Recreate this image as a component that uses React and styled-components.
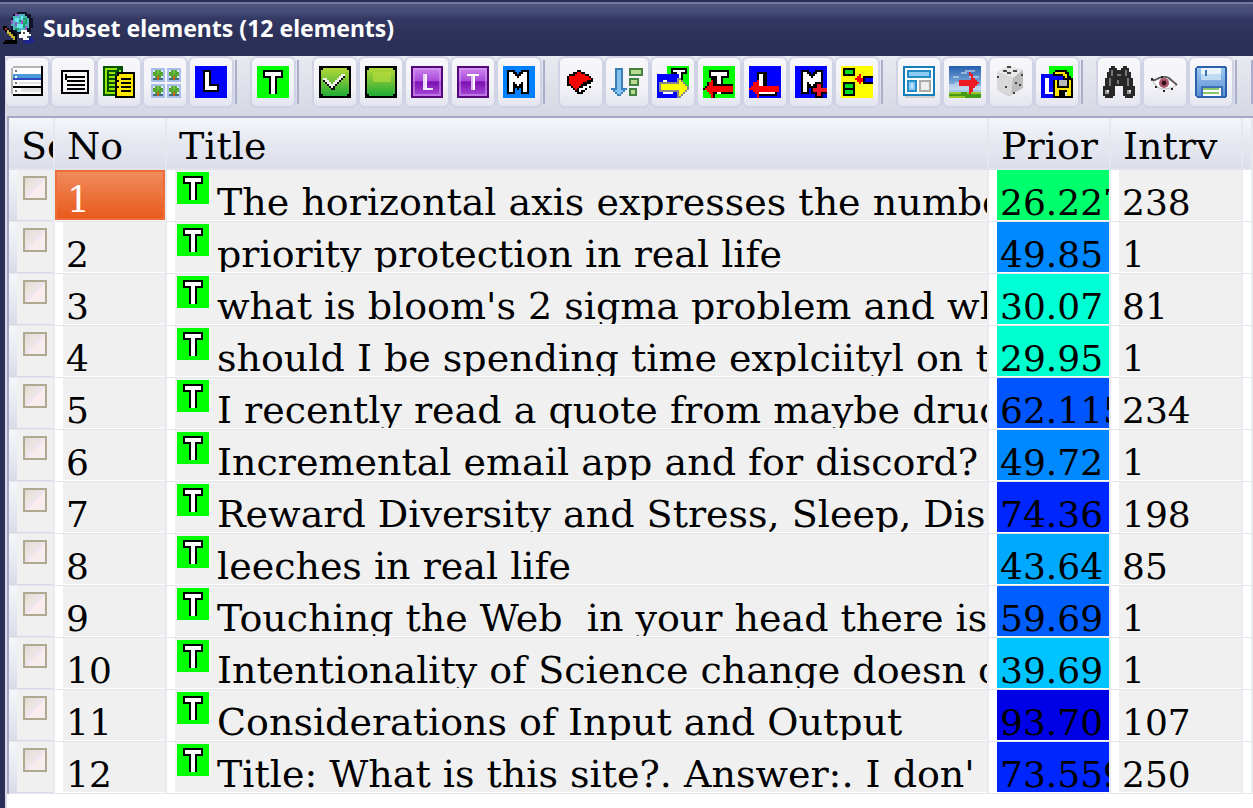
import React from 'react';
import styled, { createGlobalStyle } from 'styled-components';

const GlobalStyle = createGlobalStyle`
  * { box-sizing: border-box; }
  html, body { margin: 0; background: #fff; }
  body { overflow: hidden; }
`;

const Window = styled.div`
  min-height: 100vh;
  padding-left: 5px;
  background: #2a2f57;
  display: flex;
  flex-direction: column;
`;

const TitleBar = styled.header`
  height: 56px;
  margin-left: -5px;
  padding: 0 0 0 3px;
  display: flex;
  align-items: center;
  gap: 8px;
  background: linear-gradient(#2a2f55 0 2px, #7478a0 2px 4px, #50557f 4px, #434a75 13px, #343a64 18px, #2c3159 36px, #2a2f57 56px);
`;

const Caption = styled.h1`
  margin: 0;
  font: 700 23px/32px "Noto Sans", sans-serif;
  color: #fff;
  white-space: nowrap;
`;

const Toolbar = styled.div`
  height: 60px;
  flex: none;
  padding-top: 1px;
  display: flex;
  align-items: flex-start;
  gap: 2px;
  overflow: hidden;
  background: linear-gradient(#e9eaf0, #d5d7e3);
`;

const ToolButton = styled.button`
  flex: none;
  width: 44px;
  height: 50px;
  padding: 0;
  display: grid;
  place-items: center;
  border: 1px solid #d0d2e5;
  border-radius: 6px;
  background: linear-gradient(#f8f8fb, #f2f2f7 60%, #e4e5ef);
  box-shadow: 0 0 0 1px #d0d2e5;
`;

const Separator = styled.span`
  flex: none;
  width: 2px;
  height: 44px;
  margin: 3px 12px 0 0;
  background: #a9aecb;
`;

const List = styled.main`
  flex: 1;
  border-left: 2px solid #d9dae5;
  background: #fff;
`;

const ListFrame = styled.div`
  border: solid #a4a8c5;
  border-width: 2px 0 0 2px;
  overflow: hidden;
  min-height: 100%;
`;

const Grid = styled.table`
  width: 100%;
  table-layout: fixed;
  border-collapse: separate;
  border-spacing: 0;
  font: 38px/64px "DejaVu Serif", serif;
  color: #000;
`;

const Col = styled.col`
  width: ${(p) => p.$w || 'auto'};
`;

const HeadCell = styled.th`
  height: 52px;
  padding: 0 0 0 12px;
  text-align: left;
  font-weight: 400;
  line-height: 57px;
  border-right: 2px solid #e6e8ee;
  border-bottom: 2px solid #e0e2ec;
  background: linear-gradient(#f5f6fa, #e6e8f1 50%, #dcdeea);
`;

const HeadText = styled.div`
  height: 50px;
  overflow: hidden;
  white-space: nowrap;
`;

const Cell = styled.td`
  height: 52px;
  padding: 0 0 1px 8px;
  border-right: 2px solid #e8ebf0;
  border-bottom: 1px solid #e4e6eb;
  background: ${(p) => (p.$lead ? 'linear-gradient(#f6f7fb, #d9dbe9)' : '#fff')};
`;

const Content = styled.div`
  height: 50px;
  padding-left: 3px;
  overflow: hidden;
  white-space: pre;
  background: #f0f0f0;
`;

const NumberContent = styled(Content)`
  font-size: 36px;
  line-height: 66px;
  background: ${(p) => p.$fill || '#f0f0f0'};
`;

const TickContent = styled(Content)`
  padding: 6px 0 0 6px;
`;

const TitleContent = styled(Content)`
  display: flex;
  align-items: flex-start;
  gap: 8px;
  padding-left: 2px;

  svg { margin-top: 2px; }
`;

const SelectedCell = styled(Cell)`
  padding: 0 0 1px;
`;

const SelectedContent = styled(NumberContent)`
  padding-left: 10px;
  line-height: 56px;
  color: #fff;
  border: 2px solid #ee6c38;
  background: linear-gradient(#f08a5c, #ea5a1c);
`;

const Tick = styled.input`
  appearance: none;
  display: block;
  width: 24px;
  height: 24px;
  margin: 0;
  border: 2px solid #b0a890;
  background: linear-gradient(135deg, #dedbd4, #ece6e2 38%, #ebe4f0 48%, #fbecec 58%, #f1efec);
`;

const Svg = styled.svg`
  display: block;
  flex: none;
  width: 32px;
  height: 32px;
`;

const Art = ({ children, smooth }) => (
  <Svg viewBox="0 0 16 16" shapeRendering={smooth ? 'auto' : 'crispEdges'} aria-hidden="true">
    {children}
  </Svg>
);

const Tee = () => (
  <>
    <path fill="#000" d="M3 2h10v4h-3v8H6V6H3z" />
    <path fill="#fff" d="M4 3h8v2H9v9H7V5H4z" />
  </>
);

const Ell = () => (
  <>
    <path fill="#000" d="M4 2h4v7h4v4H4z" />
    <path fill="#fff" d="M5 3h2v7h4v2H5z" />
  </>
);

const Em = () => (
  <>
    <path fill="#000" d="M2 2h4v1h1v1h1V3h1V2h4v12H9v-3H8v1H7v-1H6v3H2z" />
    <path fill="#fff" d="M3 3h2v1h1v1h1v1h1V5h1V4h1V3h2v10h-2V8H9v1H8v1H7V9H6V8H5v5H3z" />
  </>
);

const TopicIcon = () => <Art><path fill="#0f0" d="M0 0h16v16H0z" /><Tee /></Art>;

const icons = {
  rows: (
    <Art>
      <path fill="#fff" d="M1 0h14v15H1z" />
      <path fill="#b4b4b4" d="M0 1h1V0h15v1H1v13H0z" />
      <path fill="#4b9bdc" d="M1 4h14v2H1z" /><path fill="#3048c0" d="M1 6h14v1H1z" />
      <path fill="#e4e4e4" d="M5 11h10v2H5zM4 8h11v1H4z" />
      <path d="M15 0h1v15H1v-1h14v-3H1v-1h14z" />
      <path fill="#777" d="M2 2h1v1H2zM2 8h1v1H2zM2 12h1v1H2z" /><path fill="#fff" d="M2 5h1v1H2z" />
    </Art>
  ),
  outline: (
    <Art>
      <path d="M2 2h14v12H2z" /><path fill="#f6f6f8" d="M3 3h12v10H3z" />
      <path d="M4 4h1v3H4zM5 5h9v1H5zM5 7h9v1H5zM5 9h9v1H5zM5 11h9v1H5z" />
    </Art>
  ),
  pages: (
    <Art>
      <path fill="#050" d="M0 0h10v15H0z" /><path fill="#9be40c" d="M1 1h6v1H1zM1 2h1v12H1zM3 3h3v1H3zM3 5h3v1H3zM3 7h3v1H3zM3 9h3v1H3zM3 11h3v1H3zM1 13h5v1H1zM8 2h1v1H8z" />
      <path d="M7 3h9v13H6V5h1z" /><path fill="#ffe800" d="M7 5h1V4h7v11H7z" />
      <path d="M9 6h5v1H9zM9 8h5v1H9zM9 10h5v1H9zM9 12h5v1H9zM7 7h1v1H7zM7 10h1v1H7z" />
    </Art>
  ),
  thumbs: (
    <Art>
      {[[1, 1], [9, 1], [1, 9], [9, 9]].map(([x, y]) => (
        <g key={`${x}-${y}`} transform={`translate(${x} ${y})`}>
          <path fill="#a9bde9" d="M0 0h7v7H0z" /><path fill="#d7e8fb" d="M1 1h5v4H1z" />
          <path fill="#55a532" d="M2 1h3v1h1v2H5v1H2V4H1V2h1z" /><path fill="#79c342" d="M3 1h1v2H3z" />
          <path fill="#476b83" d="M1 5h5v1H1z" /><path fill="#c36a20" d="M3 4h1v2H3z" />
        </g>
      ))}
    </Art>
  ),
  blueL: <Art><path fill="#00f" d="M0 0h16v16H0z" /><Ell /></Art>,
  greenT: <TopicIcon />,
  check: (
    <Art>
      <path d="M0 0h16v16H0z" /><path fill="url(#leaf)" d="M2 1h12v1h1v12h-1v1H2v-1H1V2h1z" />
      <path fill="#111" d="M2 7h2v1h1v1h1v1h1V9h1V8h1V7h1V6h1V5h1V4h1v2h-1v1h-1v1h-1v1h-1v1H8v2H6v-1H5v-1H4V9H3V8H2z" />
      <path fill="#f0f2ea" d="M2 6h2v1h1v1h1v1h1V8h1V7h1V6h1V5h1V4h2v1h-1v1h-1v1h-1v1H9v1H8v1H7v1H6v-1H5V9H4V8H3V7H2z" />
    </Art>
  ),
  green: (
    <Art>
      <path d="M0 0h16v16H0z" /><path fill="url(#leaf)" d="M2 1h12v1h1v12h-1v1H2v-1H1V2h1z" />
      <path fill="#b4dc3c" opacity=".7" d="M4 3h9v5H4z" />
    </Art>
  ),
  violetL: (
    <Art>
      <path fill="#56077c" d="M0 0h16v16H0z" /><path fill="url(#violet)" d="M1 1h14v14H1z" />
      <path fill="#d7a4f4" opacity=".5" d="M1 1h14v1H2v12h12V2h1v13H1z" />
      <path fill="#e9d3f7" d="M6 4h2v7h3v1H6z" /><path fill="#fff" d="M7 4h1v7h2v1H6v-1h1z" opacity=".6" />
    </Art>
  ),
  violetT: (
    <Art>
      <path fill="#56077c" d="M0 0h16v16H0z" /><path fill="url(#violet)" d="M1 1h14v14H1z" />
      <path fill="#d7a4f4" opacity=".5" d="M1 1h14v1H2v12h12V2h1v13H1z" />
      <path fill="#fff" d="M5 4h6v1H9v7H8V5H5z" /><path fill="#dcbcf1" d="M7 5h1v7H7z" />
    </Art>
  ),
  azureM: <Art><path fill="#0080ff" d="M0 0h16v16H0z" /><Em /></Art>,
  book: (
    <Art>
      <path d="M4 3h2V2h2v1h2v1h2v1h1v1h1v4h-1v1h-2v1h-1v1H9v1H6v-1H5v-1H4v-1H3v-1H1V5h1V4h2z" />
      <path fill="#f00" d="M5 4h1V3h2v1h2v1h2v1h1v1h-2v1h-2v1H8v1H7v1H6v1H5v-1H4v-1H3V9H2V5h3z" />
      <path fill="#fff" d="M7 11h2v-1h2V9h2V8h1v2h-2v1h-2v1H8v1H7z" />
    </Art>
  ),
  sort: (
    <Art>
      <path fill="#397fb8" d="M2 1h4v10h2v1H7v1H6v1H5v1H3v-1H2v-1H1v-1H0v-1h2z" />
      <path fill="#83c2ef" d="M3 2h2v10h2v0H6v1H5v1H3v-1H2v-1h1z" />
      <path fill="#438241" d="M9 1h7v4H9zM9 6h5v4H9zM9 11h4v4H9z" />
      <path fill="#bad992" d="M10 2h5v2h-5zM10 7h3v2h-3zM10 12h2v2h-2z" />
    </Art>
  ),
  linkT: (
    <Art>
      <path fill="#0f0" d="M5 0h11v12H5z" /><path d="M7 1h8v3h-2v8H9V4H7z" /><path fill="#fff" d="M8 2h6v1h-2v8h-2V3H8z" />
      <path fill="#00f" d="M0 4h11v12H0z" /><path fill="#fff" d="M3 7h2v7H3zM4 13h4v1H4z" />
      <path fill="#888" d="M1 8h9V6h2v1h1v1h1v1h1v1h1v2h-1v1h-1v1h-1v1h-1v1h-2v-3H1z" />
      <path fill="#ff0" d="M2 9h9V7h1v1h1v1h1v1h1v2h-1v1h-1v1h-1v1h-1v-3H2z" />
    </Art>
  ),
  moveT: (
    <Art><path fill="#0f0" d="M0 0h16v16H0z" /><Tee />
      <path d="M4 6h2v3h9v5H6v2H4v-2H3v-1H2v-1H0v-1h1v-1h1V8h2z" />
      <path fill="red" d="M4 7h1v3h10v3H5v3H4v-2H3v-1H2v-1H1v-1h1v-1h1V8h1z" /><path fill="#fff" d="M7 13h2v1H7z" />
    </Art>
  ),
  moveL: (
    <Art><path fill="#00f" d="M0 0h16v16H0z" /><path d="M4 3h5v7h5v5H4z" /><path fill="#fff" d="M5 4h2v9h6v1H5z" />
      <path fill="red" d="M4 7h1v3h10v3H5v3H4v-2H3v-1H2v-1H0v-1h1v-1h1V8h2z" />
    </Art>
  ),
  addM: (
    <Art><path fill="#00f" d="M0 0h16v16H0z" /><g transform="translate(1 0)"><Em /></g>
      <path d="M10 8h4v3h2v3h-2v2h-4v-2H8v-3h2z" /><path fill="#f01828" d="M11 9h2v2h3v2h-3v2h-2v-2H9v-2h2z" />
    </Art>
  ),
  insert: (
    <Art><path fill="#ff0" d="M0 0h16v16H0z" /><path d="M1 1h6v4H1zM1 8h6v7H1zM11 5h5v4h-5z" />
      <path fill="#00e020" d="M2 2h4v2H2zM2 9h4v2H2zM2 12h4v2H2z" /><path fill="#00f" d="M12 6h4v2h-4z" />
      <path fill="red" d="M9 4h1v2h1v2h-1v1H9V8H8V7H7V6h1V5h1z" />
    </Art>
  ),
  layout: (
    <Art><path fill="#147eb8" d="M0 0h16v15H0z" /><path fill="#fff" d="M1 1h14v13H1z" /><path fill="#cfcfcf" d="M1 15h15v1H1z" />
      <path fill="#258cc6" d="M2 2h12v4H2zM2 7h5v6H2z" /><path fill="#8dcdf5" d="M3 3h10v2H3zM3 8h3v4H3z" /><path fill="#c9e9ff" d="M4 9h1v2H4z" />
      <path fill="#aaa" d="M8 7h6v6H8z" /><path fill="#eee" d="M9 8h4v4H9z" />
    </Art>
  ),
  picture: (
    <Art><path fill="url(#sky)" d="M0 0h16v13H0z" /><path fill="#e5edf6" d="M0 9h3V8h3v1h7v1h3v2H0zM6 3h2V2h5v1H9v1H6zM2 5h3v1H2zM10 5h5v1h-5z" opacity=".5" />
      <path fill="#449b19" d="M0 14h4v-1h7v1h5v2H0z" /><path fill="#99c72a" d="M0 13h6v1H0zM9 13h7v1H9zM0 15h8v1H0z" />
      <path fill="#ed1c24" d="M10 3h1v1h1v2h1v1h1v1h1v1h-1v1h-1v1h-1v2h-1v1h-1v-4H5V7h6V5h-1z" />
    </Art>
  ),
  dice: (
    <Art smooth><path fill="#bcbcbc" d="m1 3 6-3 7 2v9l-7 4-6-3z" /><path fill="#e8e8e8" d="m1 3 6-3 7 2-5 4z" />
      <path fill="#d9d9d9" d="m1 3 8 3-1 9-7-3z" />
      <path fill="#444" d="M6 0h2v1H6zM4 2h2v1H4zM6 3h2v1H6zM9 2h2v1H9zM1 5h1v1H1zM5 10h1v1H5zM9 13h1v1H9zM10 8h1v1h-1zM13 4h1v1h-1zM12 9h1v1h-1z" />
    </Art>
  ),
  saveSet: (
    <Art><path fill="#0f0" d="M4 0h12v12H4z" /><path fill="#00f" d="M0 4h11v12H0z" /><path fill="#fff" d="M2 6h2v7h2v1H2z" />
      <path d="M6 3h1V2h6v1h1v2h1v1h1v10H6V7h5V5H6z" /><path fill="#ffe800" d="M7 3h5v1h1v2h-1V5h-1V4H7zM7 7h1v4h6V7h1v8h-2v-3H9v3H7z" />
      <path fill="#b8b8b8" d="M9 7h4v3H9z" /><path fill="#ddd" d="M12 13h1v2h-1z" />
    </Art>
  ),
  find: (
    <Art><path fill="#272727" d="M3 1h4v1h2V1h4v2h1v3h1v4h1v5h-1v1h-4v-1h-1v-5H6v5H5v1H1v-1H0v-5h1V6h1V3h1zM4 0h2v1H4zM10 0h2v1h-2z" />
      <path fill="#777" d="M4 2h1v3H4zM3 6h1v4H3zM11 2h1v3h-1zM12 6h1v4h-1zM7 4h2v1H7zM7 7h1v2H7z" />
      <path fill="#999" d="M1 12h2v2H1zM12 12h2v2h-2z" /><path fill="#eee" d="M2 12h1v1H2zM13 12h1v1h-1z" />
    </Art>
  ),
  eye: (
    <Art smooth><path fill="#fff" stroke="#bbb" strokeWidth=".5" d="M2 7.500Q8 4 14 9.500 8 13 4 10.500z" />
      <path fill="none" stroke="#5e5658" strokeWidth=".9" d="M1 7 3 7Q7 4.500 10 6l4 3.500" />
      <circle cx="7.500" cy="8.500" r="2.500" fill="#ae5771" /><circle cx="7.500" cy="8.500" r="1.200" fill="#37121e" />
      <path fill="#222" d="M3 10h1v1H3zM7 12h1v1H7zM11 11h1v1h-1zM1 6h1v1H1zM6 5h1v1H6z" />
    </Art>
  ),
  disk: (
    <Art><path fill="#2c62ac" d="M1 0h14l1 1v14l-1 1H1l-1-1V1z" /><path fill="url(#disk)" d="M1 1h14v14H1z" />
      <path fill="#e9f3fc" d="M3 1h10v6H3z" /><path fill="#bfdbf1" d="M3 4h10v3H3z" /><path fill="#3d75ba" d="M5 2h1v3H5z" />
      <path fill="#3b70b7" d="M3 10h11v5H3z" /><path fill="#fff" d="M4 11h9v4H4z" /><path fill="#8bc56b" d="M4 11h8v1H4zM4 13h8v1H4z" />
    </Art>
  ),
};

const groups = [
  [['rows', 'List view'], ['outline', 'Outline view'], ['pages', 'Pages'], ['thumbs', 'Thumbnails'], ['blueL', 'Lessons']],
  [['greenT', 'Topics']],
  [['check', 'Check'], ['green', 'Uncheck'], ['violetL', 'Violet L'], ['violetT', 'Violet T'], ['azureM', 'Memorized']],
  [['book', 'Book'], ['sort', 'Sort'], ['linkT', 'Link'], ['moveT', 'Move topic'], ['moveL', 'Move lesson'], ['addM', 'Add'], ['insert', 'Insert']],
  [['layout', 'Layout'], ['picture', 'Picture'], ['dice', 'Random'], ['saveSet', 'Save subset']],
  [['find', 'Find'], ['eye', 'View'], ['disk', 'Save']],
];

const elements = [
  ['The horizontal axis expresses the numbe', '26.227', '238', '#00ff6c'],
  ['priority protection in real life', '49.85', '1', '#0088ff'],
  ["what is bloom's 2 sigma problem and wh", '30.07', '81', '#00ffd4'],
  ['should I be spending time explciityl on t', '29.95', '1', '#00ffcf'],
  ['I recently read a quote from maybe druc', '62.115', '234', '#0055ff'],
  ['Incremental email app and for discord?', '49.72', '1', '#0088ff'],
  ['Reward Diversity and Stress, Sleep, Disc', '74.36', '198', '#0026ff'],
  ['leeches in real life', '43.64', '85', '#00a8ff'],
  ['Touching the Web  in your head there is', '59.69', '1', '#005eff'],
  ['Intentionality of Science change doesn c', '39.69', '1', '#00c4ff'],
  ['Considerations of Input and Output', '93.70', '107', '#0000e6'],
  ["Title: What is this site?. Answer:. I don'", '73.559', '250', '#0026ff'],
];

const HiddenSvg = styled.svg`
  position: absolute;
`;

const Gradients = () => (
  <HiddenSvg width="0" height="0" aria-hidden="true">
    <defs>
      <linearGradient id="leaf" x2="0" y2="1"><stop stopColor="#b2d939" /><stop offset=".5" stopColor="#6cc038" /><stop offset="1" stopColor="#20ad38" /></linearGradient>
      <linearGradient id="violet" x2="0" y2="1"><stop stopColor="#cf83f0" /><stop offset=".45" stopColor="#a84bd8" /><stop offset=".5" stopColor="#7c0fb2" /><stop offset="1" stopColor="#a94bd8" /></linearGradient>
      <linearGradient id="sky" x2="0" y2="1"><stop stopColor="#235eae" /><stop offset="1" stopColor="#a7cced" /></linearGradient>
      <linearGradient id="disk" x2="0" y2="1"><stop stopColor="#9ec7ee" /><stop offset="1" stopColor="#5c8fd6" /></linearGradient>
    </defs>
  </HiddenSvg>
);

const AppIcon = () => (
  <Art>
    <path fill="#101426" d="M5 1h2V0h5v1h2v2h1v5h-1v2h-2v1H5V9H4V3h1z" />
    <path fill="#4fb4c0" d="M5 2h1V1h5v1h1v1h1v5h-1v1h-1v1H7V9H5V7H4V4h1z" />
    <path fill="#68e8ed" d="M6 3h2v2H6zM7 6h3v2H7zM9 2h1v2H9z" /><path fill="#17a45e" d="M10 3h2v3h-1v2h-1V5h1V4h-1zM6 8h2v1H6zM8 4h1v1H8z" />
    <path fill="#8f5cc4" d="M6 1h2v1H6zM4 4h1v2H4zM9 4h1v2H9zM6 5h1v2H6zM11 7h1v2h-1z" />
    <path d="M0 7h2v1h1v1h2v1h1v1h1v3H5v-1H4v-1H3v-1H2v-1H1V9H0zM1 14h6v2H0v-1h1z" />
    <path fill="#c4b535" d="M2 9h1v1h1v1h1v1h1v2H5v-1H4v-1H3v-1H2z" /><path fill="#b32323" d="M1 8h1v1H1z" />
    <path fill="#fff" d="M9 9h3v1h1v1h1v2h-1v1h-3v-1H8v-2h1z" /><path fill="#1c258e" d="M13 12h1v1h1v1h1v1h-2v1h-3v-1h-1v-1h3z" /><path fill="#555" d="M10 10h1v1h-1zM12 12h1v1h-1z" />
  </Art>
);

export default function App() {
  return (
    <Window>
      <GlobalStyle />
      <Gradients />
      <TitleBar>
        <AppIcon />
        <Caption>Subset elements (12 elements)</Caption>
      </TitleBar>
      <Toolbar role="toolbar" aria-label="Subset tools">
        {groups.map((group, i) => (
          <React.Fragment key={i}>
            {group.map(([id, label]) => (
              <ToolButton key={id} type="button" aria-label={label}>{icons[id]}</ToolButton>
            ))}
            <Separator />
          </React.Fragment>
        ))}
        <Separator />
      </Toolbar>
      <List>
        <ListFrame>
          <Grid>
            <colgroup>
              <Col $w="46px" /><Col $w="112px" /><Col /><Col $w="122px" /><Col $w="132px" /><Col $w="10px" />
            </colgroup>
            <thead>
              <tr>
                {['Se', 'No', 'Title', 'Prior', 'Intrv', ''].map((name) => (
                  <HeadCell key={name} scope="col"><HeadText>{name}</HeadText></HeadCell>
                ))}
              </tr>
            </thead>
            <tbody>
              {elements.map(([title, priority, interval, fill], i) => (
                <tr key={title}>
                  <Cell $lead>
                    <TickContent><Tick type="checkbox" aria-label={`Select element ${i + 1}`} /></TickContent>
                  </Cell>
                  {i === 0
                    ? <SelectedCell><SelectedContent>{i + 1}</SelectedContent></SelectedCell>
                    : <Cell><NumberContent>{i + 1}</NumberContent></Cell>}
                  <Cell><TitleContent><TopicIcon />{title}</TitleContent></Cell>
                  <Cell><NumberContent $fill={fill}>{priority}</NumberContent></Cell>
                  <Cell><NumberContent>{interval}</NumberContent></Cell>
                  <Cell />
                </tr>
              ))}
            </tbody>
          </Grid>
        </ListFrame>
      </List>
    </Window>
  );
}
